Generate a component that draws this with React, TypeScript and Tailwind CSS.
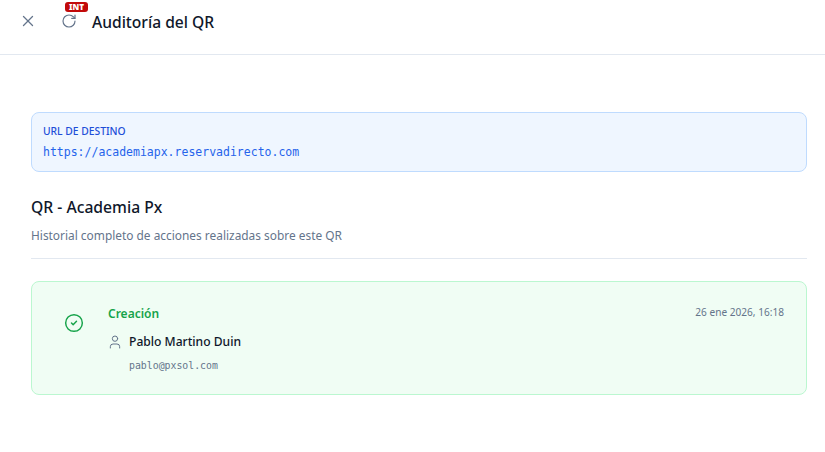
import { CircleCheck, RotateCw, User, X } from "lucide-react"

const sans = "font-['Noto_Sans','Inter',sans-serif]"
const mono = "font-['DejaVu_Sans_Mono','Liberation_Mono',monospace]"

export default function App() {
  return (
    <div className={`w-[825px] h-[452px] bg-white overflow-hidden ${sans}`}>
      <header className="h-[55px] border-b border-[#e2e8f0] flex items-center pb-[12px] pl-[20px]">
        <button className="w-4 h-4 flex items-center justify-center text-[#64748b]">
          <X className="w-[18px] h-[18px] shrink-0" strokeWidth={1.75} />
        </button>
        <div className="relative ml-[25px] w-4 h-4 text-[#64748b]">
          <RotateCw className="w-4 h-4" strokeWidth={1.75} />
          <span className="absolute left-[4px] top-[-11px] h-[10px] w-[23px] rounded-[3px] bg-[#c20a0a] text-white text-[8px] leading-[10px] font-black text-center">
            INT
          </span>
        </div>
        <h1 className="ml-[15px] mt-[2px] text-[15.6px] leading-[20px] font-medium text-[#0f172a]">Auditoría del QR</h1>
      </header>
      <main className="pl-[31px] pr-[18px] pt-[57px]">
        <div className="h-[60px] rounded-lg border border-[#bfdbfe] bg-[#eff6ff] px-[11px] pt-[11px]">
          <p className="text-[10.3px] leading-[14px] font-medium text-[#1d4ed8]">URL DE DESTINO</p>
          <p className={`mt-[6px] text-[11.5px] leading-[16px] text-[#2563eb] ${mono}`}>https://academiapx.reservadirecto.com</p>
        </div>
        <h2 className="mt-[24px] text-[15.7px] leading-[22px] font-medium text-[#0f172a]">QR - Academia Px</h2>
        <p className="mt-[8px] text-[11.9px] leading-[18px] text-[#64748b]">Historial completo de acciones realizadas sobre este QR</p>
        <div className="mt-[14px] border-t border-[#e2e8f0]" />
        <div className="mt-[22px] h-[114px] rounded-lg border border-[#bbf7d0] bg-[#f0fdf4] flex pl-[32px] pr-[22px] pt-[23px]">
          <CircleCheck className="mt-[8px] w-5 h-5 shrink-0 text-[#16a34a]" strokeWidth={1.75} />
          <div className="ml-[24px] flex-1">
            <div className="flex justify-between">
              <span className="text-[12px] leading-[18px] font-semibold text-[#16a34a]">Creación</span>
              <span className="text-[10.1px] leading-[14px] text-[#64748b]">26 ene 2026, 16:18</span>
            </div>
            <div className="mt-[10px] flex items-center gap-[6px]">
              <User className="-ml-[1px] w-4 h-4 text-[#64748b]" strokeWidth={1.5} />
              <span className="text-[12.1px] leading-[18px] font-medium text-[#0f172a]">Pablo Martino Duin</span>
            </div>
            <p className={`mt-[8px] ml-[21px] text-[9.85px] leading-[14px] text-[#64748b] ${mono}`}>pablo@pxsol.com</p>
          </div>
        </div>
      </main>
    </div>
  )
}
